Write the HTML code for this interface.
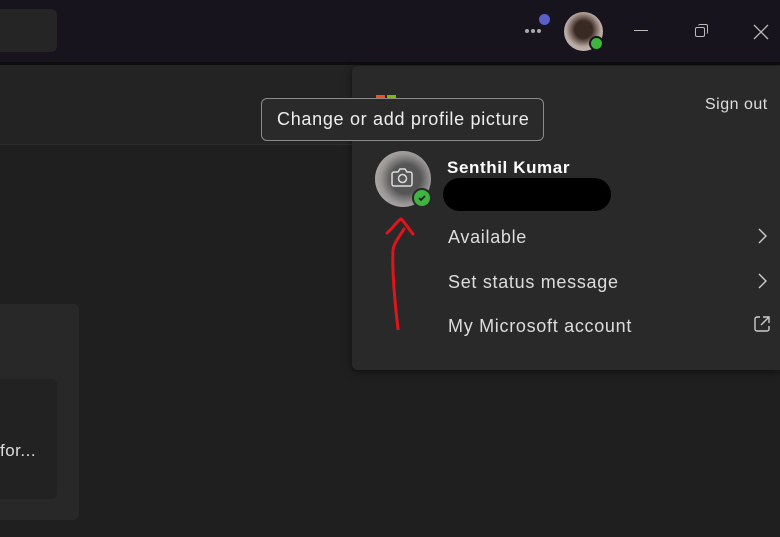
<!DOCTYPE html>
<html><head><style>
*{margin:0;padding:0;box-sizing:border-box}
body{width:780px;height:537px;overflow:hidden;background:#1f1f1f;font-family:"Liberation Sans",sans-serif;position:relative;color:#fff}
.a{position:absolute}
.m{font-size:18px;letter-spacing:0.7px;color:#ddd}
</style></head><body>
<div class="a" style="left:0;top:0;width:780px;height:62px;background:#17141d"></div>
<div class="a" style="left:0;top:62px;width:780px;height:3px;background:#0e0d10"></div>
<div class="a" style="left:0;top:9px;width:57px;height:43px;background:#252525;border-radius:0 6px 6px 0"></div>
<div class="a" style="left:0;top:65px;width:780px;height:80px;background:#232323;border-bottom:1px solid #2c2c2c"></div>
<div class="a" style="left:0;top:304px;width:79px;height:216px;background:#282828;border-radius:0 5px 5px 0"></div>
<div class="a" style="left:0;top:379px;width:57px;height:120px;background:#222;border-radius:0 5px 5px 0"></div>
<div class="a" style="left:0;top:441px;font-size:17px;letter-spacing:0.5px;color:#ddd">for...</div>
<div class="a" style="left:525px;top:29px;width:4px;height:4px;border-radius:2px;background:#aaa;box-shadow:6px 0 #aaa,12px 0 #aaa"></div>
<div class="a" style="left:539px;top:14px;width:11px;height:11px;border-radius:50%;background:#5b5fc7"></div>
<div class="a" style="left:564px;top:12px;width:39px;height:39px;border-radius:50%;background:radial-gradient(circle at 50% 45%,#3a2a24 0 30%,#b8a8a0 60%,#ccc)"></div>
<div class="a" style="left:589px;top:36px;width:15px;height:15px;border-radius:50%;background:#3fb43f;border:2px solid #17141d"></div>
<div class="a" style="left:634px;top:30px;width:14px;height:1px;background:#bbb"></div>
<div class="a" style="left:695px;top:27px;width:10px;height:10px;border:1px solid #bbb;border-radius:2px"></div>
<div class="a" style="left:698px;top:24px;width:10px;height:10px;border-top:1px solid #bbb;border-right:1px solid #bbb;border-radius:2px"></div>
<svg class="a" style="left:753px;top:24px" width="16" height="16"><path d="M1 1L15 15M15 1L1 15" stroke="#bbb" stroke-width="1.3"/></svg>
<div class="a" style="left:352px;top:66px;width:428px;height:304px;background:#292929;border-radius:6px 0 0 6px;box-shadow:0 2px 8px rgba(0,0,0,.5)"></div>
<div class="a" style="left:376px;top:95px;width:9px;height:9px;background:#f25022"></div>
<div class="a" style="left:387px;top:95px;width:9px;height:9px;background:#7fba00"></div>
<div class="a" style="left:705px;top:96px;font-size:16px;letter-spacing:0.5px;color:#ddd">Sign out</div>
<div class="a" style="left:375px;top:151px;width:56px;height:56px;border-radius:50%;background:radial-gradient(circle at 55% 50%,#555 0 35%,#9a9696 60%,#c8c8c8)"></div>
<svg class="a" style="left:390px;top:166px" width="24" height="22"><path d="M4 6h4l2-3h5l2 3h3a2 2 0 0 1 2 2v10a2 2 0 0 1-2 2H4a2 2 0 0 1-2-2V8a2 2 0 0 1 2-2z" fill="none" stroke="#ddd" stroke-width="1.5"/><circle cx="12.5" cy="12.5" r="4" fill="none" stroke="#ddd" stroke-width="1.5"/></svg>
<div class="a" style="left:412px;top:188px;width:20px;height:20px;border-radius:50%;background:#3fb43f;border:2px solid #292929"></div>
<svg class="a" style="left:417px;top:193px" width="10" height="10"><path d="M2 5l2 2 4-4" stroke="#1a1a1a" stroke-width="1.6" fill="none"/></svg>
<div class="a" style="left:447px;top:158px;font-size:17px;font-weight:bold;letter-spacing:0.6px">Senthil Kumar</div>
<div class="a" style="left:443px;top:178px;width:168px;height:33px;background:#000;border-radius:17px"></div>
<div class="a m" style="left:448px;top:227px">Available</div>
<div class="a m" style="left:448px;top:272px">Set status message</div>
<div class="a m" style="left:448px;top:316px">My Microsoft account</div>
<svg class="a" style="left:755px;top:227px" width="14" height="18"><path d="M4 2l7 7-7 7" stroke="#ccc" stroke-width="1.4" fill="none"/></svg>
<svg class="a" style="left:755px;top:272px" width="14" height="18"><path d="M4 2l7 7-7 7" stroke="#ccc" stroke-width="1.4" fill="none"/></svg>
<svg class="a" style="left:753px;top:315px" width="18" height="18"><path d="M7 2H4a2 2 0 0 0-2 2v10a2 2 0 0 0 2 2h10a2 2 0 0 0 2-2v-3M10 2h6v6M16 2L8 10" stroke="#ccc" stroke-width="1.4" fill="none"/></svg>
<div class="a" style="left:261px;top:98px;width:283px;height:43px;background:#2a2a2a;border:1px solid #8a8a8a;border-radius:6px;font-size:18px;letter-spacing:0.7px;color:#eee;padding:10px 0 0 15px;white-space:nowrap">Change or add profile picture</div>
<svg class="a" style="left:380px;top:215px" width="50" height="115"><path d="M7 18C14 12 17 6 21 4c3 2 7 9 12 15M24 14C19 22 14 28 13 35c-1 20 1 45 5 79" stroke="#e0141a" stroke-width="3" fill="none" stroke-linecap="round"/></svg>
</body></html>
